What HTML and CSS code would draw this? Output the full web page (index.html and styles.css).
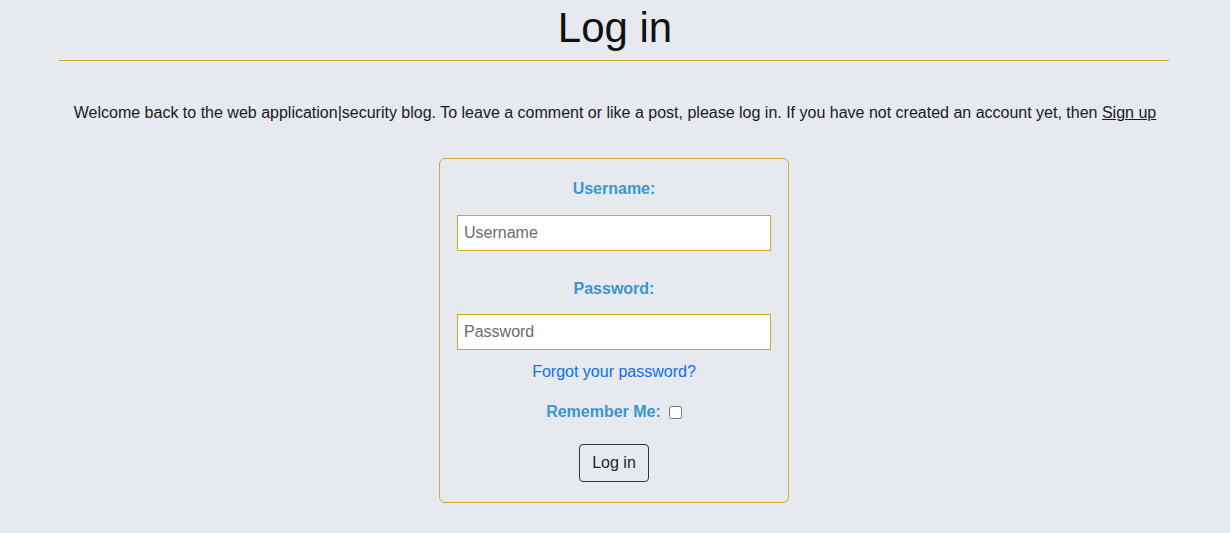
FILE: index.html
```html
<!DOCTYPE html>
<html lang="en">
<head>
<meta charset="utf-8">
<title>Log in</title>
<link rel="stylesheet" href="styles.css">
</head>
<body>
<main class="container">
  <h1 class="title">Log in</h1>
  <div class="rule"></div>
  <p class="intro">Welcome back to the web application|security blog. To leave a comment or like a post, please log in. If you have not created an account yet, then <a class="signup" href="#">Sign up</a></p>
  <form class="login-box">
    <label class="field-label" for="username">Username:</label>
    <input class="field-input" id="username" type="text" placeholder="Username">
    <label class="field-label field-label--second" for="password">Password:</label>
    <input class="field-input field-input--second" id="password" type="password" placeholder="Password">
    <a class="forgot" href="#">Forgot your password?</a>
    <div class="remember">
      <label class="field-label remember-label" for="remember">Remember Me:</label>
      <input class="remember-box" id="remember" type="checkbox">
    </div>
    <button class="submit" type="button">Log in</button>
  </form>
</main>
</body>
</html>
```

FILE: styles.css
```css
* { box-sizing: border-box; }
html, body {
  margin: 0;
  padding: 0;
  background: #e6e9ee;
  font-family: "Liberation Sans", Arial, Helvetica, sans-serif;
  color: #212529;
}
.container {
  width: 1110px;
  margin: 0 auto;
  text-align: center;
}
.title {
  margin: 0;
  padding-top: 5px;
  font-size: 42px;
  font-weight: 400;
  line-height: 46px;
  color: #111;
}
.rule {
  margin: 9px 0 0 -1px;
  height: 1px;
  background: #d9a521;
  width: 1110px;
}
.intro {
  margin: 40px 0 0;
  font-size: 16px;
  line-height: 24px;
  color: #1a1a1a;
}
.signup { color: #1a1a1a; text-decoration: underline; }
.login-box {
  width: 350px;
  margin: 33px 0 0 379px;
  border: 1px solid #d6a73a;
  border-radius: 6px;
  padding: 18px 17px 20px;
  display: flex;
  flex-direction: column;
  align-items: center;
}
.field-label {
  display: block;
  font-weight: 700;
  font-size: 16px;
  line-height: 24px;
  color: #3b95d0;
}
.field-label--second { margin-top: 26px; }
.field-input {
  display: block;
  width: 314px;
  height: 36px;
  margin-top: 14px;
  padding: 0 6px;
  border: 1px solid #d4a42c;
  background: #fff;
  font-family: "Liberation Sans", Arial, sans-serif;
  font-size: 16px;
  color: #222;
  border-radius: 0;
  outline: none;
}
.field-input--second { margin-top: 13px; }
.field-input::placeholder { color: #6b6b6b; }
.forgot {
  display: block;
  margin-top: 10px;
  font-size: 16px;
  line-height: 24px;
  color: #0a6ef5;
  text-decoration: none;
}
.remember {
  margin-top: 16px;
  display: flex;
  align-items: center;
  gap: 8px;
}
.remember-box {
  margin: 0;
  width: 13px;
  height: 13px;
}
.submit {
  margin-top: 20px;
  width: 70px;
  height: 38px;
  border: 1px solid #333;
  border-radius: 4px;
  background: transparent;
  font-family: "Liberation Sans", Arial, sans-serif;
  font-size: 16px;
  color: #212529;
  padding: 0;
}
```
